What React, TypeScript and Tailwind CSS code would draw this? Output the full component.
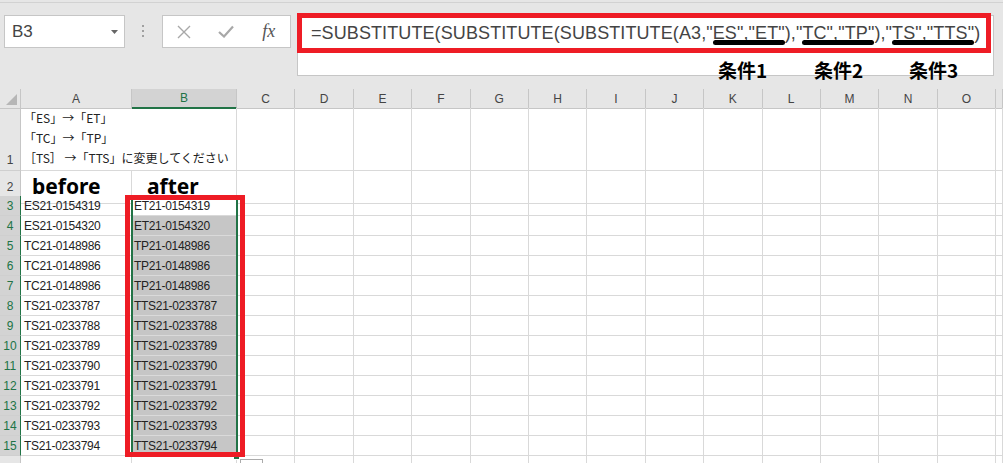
import React from 'react'

const GRID = 'grid grid-cols-[21px_111px_105px_repeat(13,58.4px)_1fr]'
const LETTERS = ['C', 'D', 'E', 'F', 'G', 'H', 'I', 'J', 'K', 'L', 'M', 'N', 'O', '']

const before = [
  'ES21-0154319',
  'ES21-0154320',
  'TC21-0148986',
  'TC21-0148986',
  'TC21-0148986',
  'TS21-0233787',
  'TS21-0233788',
  'TS21-0233789',
  'TS21-0233790',
  'TS21-0233791',
  'TS21-0233792',
  'TS21-0233793',
  'TS21-0233794',
]

const after = before.map((v) =>
  v.replace('ES', 'ET').replace('TC', 'TP').replace('TS', 'TTS'),
)

function Marked({ children }: { children: React.ReactNode }) {
  return (
    <span className="relative">
      {children}
      <span className="absolute left-0 right-0 top-[17px] h-[5px] rounded-full bg-black" />
    </span>
  )
}

function EmptyCells({ last }: { last?: boolean }) {
  return (
    <>
      {LETTERS.map((c, i) => (
        <div key={i} className={'border-r border-[#d9d9d9] ' + (last ? '' : 'border-b')} />
      ))}
    </>
  )
}

function RowHead({ n, selected, className = '' }: { n?: number; selected?: boolean; className?: string }) {
  return (
    <div
      className={
        'flex justify-center text-[12px] border-b border-[#cfcfcf] ' +
        (selected
          ? 'bg-[#d3d3d3] text-[#217346] border-r border-r-[#217346] '
          : 'bg-[#e6e6e6] text-[#444] border-r border-r-[#c6c6c6] ') +
        className
      }
    >
      {n}
    </div>
  )
}

export default function App() {
  return (
    <div className="relative w-[1003px] h-[463px] overflow-hidden bg-[#e6e6e6] font-['Liberation_Sans',sans-serif]">
      {/* toolbar + formula bar */}
      <div className="h-[89px]">
        <div className="h-[2px]" />
        <div className="h-px bg-[#d2d2d2]" />
        <div className="flex items-start mt-[12px] pl-[4px]">
          <div className="w-[121px] h-[33px] bg-white border border-[#c6c6c6] flex items-center justify-between pl-[7px] pr-[6px]">
            <span className="text-[17px] text-[#444]">B3</span>
            <svg width="7" height="4" viewBox="0 0 7 4">
              <polygon points="0,0 7,0 3.5,4" fill="#666" />
            </svg>
          </div>
          <div className="ml-[17px] mt-[10px] flex flex-col gap-[3px]">
            <span className="w-[2px] h-[2px] bg-[#a0a0a0]" />
            <span className="w-[2px] h-[2px] bg-[#a0a0a0]" />
            <span className="w-[2px] h-[2px] bg-[#a0a0a0]" />
          </div>
          <div className="ml-[18px] w-[129px] h-[33px] bg-white border border-[#c6c6c6] grid grid-cols-3 items-center justify-items-center">
            <svg width="14" height="14" viewBox="0 0 14 14">
              <path d="M1 1 L13 13 M13 1 L1 13" stroke="#a8a8a8" strokeWidth="1.4" />
            </svg>
            <svg width="16" height="13" viewBox="0 0 16 13">
              <path d="M1 7 L6 11.5 L15 1.5" stroke="#a8a8a8" strokeWidth="2.2" fill="none" />
            </svg>
            <span className="font-['Liberation_Serif',serif] italic text-[18px] text-[#555]">fx</span>
          </div>
          <div className="ml-[6px] mr-[9px] flex-1 h-[61px] bg-white border border-[#c6c6c6]">
            <div className="-mt-[3px] -ml-px w-[694px] h-[40px] border-[5px] border-[#ee1c25] flex items-center pl-[9px]">
              <span className="text-[18px] tracking-[0.1px] text-[#444] whitespace-nowrap">
                =SUBSTITUTE(SUBSTITUTE(SUBSTITUTE(A3,"<Marked>ES","ET"</Marked>),"<Marked>TC","TP"</Marked>),"<Marked>TS","TTS"</Marked>)
              </span>
            </div>
            <div className="flex mt-[8px] pl-[420px] font-['Noto_Sans_CJK_JP',sans-serif] font-bold text-[19px] leading-[18px] text-black">
              <span className="w-[96px]">条件1</span>
              <span className="w-[95px]">条件2</span>
              <span>条件3</span>
            </div>
          </div>
        </div>
      </div>

      {/* sheet */}
      <div className="bg-white">
        {/* column headers */}
        <div className={GRID + ' h-[19px] bg-[#e6e6e6] text-[12px] text-[#444]'}>
          <div className="relative border-r border-b border-[#c6c6c6]">
            <svg className="absolute left-0 top-0" width="21" height="19" viewBox="0 0 21 19">
              <polygon points="17,5 17,16 6,16" fill="#b6b6b6" />
            </svg>
          </div>
          <div className="flex items-center justify-center border-r border-b border-[#c6c6c6]">A</div>
          <div className="flex items-center justify-center bg-[#d3d3d3] text-[#217346] border-r border-[#c6c6c6] border-b-2 border-b-[#217346]">
            B
          </div>
          {LETTERS.map((c, i) => (
            <div key={i} className="flex items-center justify-center border-r border-b border-[#c6c6c6]">
              {c}
            </div>
          ))}
        </div>

        {/* row 1 */}
        <div className={GRID + ' h-[63px]'}>
          <RowHead n={1} className="items-end pb-[1px]" />
          <div className="border-b border-[#d9d9d9] pl-[3px] whitespace-nowrap font-['Noto_Sans_CJK_JP',sans-serif] text-[12px] leading-[20px] text-[#222]">
            <div>「ES」→「ET」</div>
            <div>「TC」→「TP」</div>
            <div>［TS］ →「TTS」に変更してください</div>
          </div>
          <div className="border-r border-b border-[#d9d9d9]" />
          <EmptyCells />
        </div>

        {/* row 2 */}
        <div className={GRID + ' h-[25px]'}>
          <RowHead n={2} className="items-center" />
          <div className="flex items-center pl-[11px] border-r border-b border-[#d9d9d9] font-['Noto_Sans',sans-serif] font-bold text-[21px] text-black">
            before
          </div>
          <div className="flex items-center pl-[15px] border-r border-b border-[#d9d9d9] font-['Noto_Sans',sans-serif] font-bold text-[21px] text-black">
            after
          </div>
          <EmptyCells />
        </div>

        {/* data rows */}
        {before.map((v, i) => (
          <div key={i} className={GRID + ' h-[20px]'}>
            <RowHead n={i + 3} selected className="items-center" />
            <div className="flex items-center pl-[3px] border-r border-b border-[#d9d9d9] text-[12px] tracking-[-0.3px] text-[#222]">
              {v}
            </div>
            <div
              className={
                'flex items-center pl-[2px] border-r border-b text-[12px] tracking-[-0.3px] text-[#222] ' +
                (i === 0 ? 'bg-white border-[#d9d9d9]' : 'bg-[#c6c6c6] border-[#dadada]')
              }
            >
              {after[i]}
            </div>
            <EmptyCells />
          </div>
        ))}

        {/* row 16, mostly below the window */}
        <div className={GRID + ' h-[20px]'}>
          <RowHead />
          <div className="border-r border-[#d9d9d9]" />
          <div className="border-r border-[#d9d9d9]" />
          <EmptyCells last />
        </div>
      </div>

      {/* selection outline and fill handle */}
      <div className="absolute left-[131px] top-[196px] w-[107px] h-[261px] border-2 border-[#217346]" />
      <div className="absolute left-[233px] top-[453px] w-[7px] h-[7px] bg-[#217346] border border-white" />
      {/* quick analysis button */}
      <div className="absolute left-[240px] top-[459px] w-[23px] h-[12px] bg-white border border-[#ababab]" />
      {/* red annotation box */}
      <div className="absolute left-[125px] top-[195px] w-[120px] h-[262px] border-[5px] border-[#ee1c25]" />
    </div>
  )
}
